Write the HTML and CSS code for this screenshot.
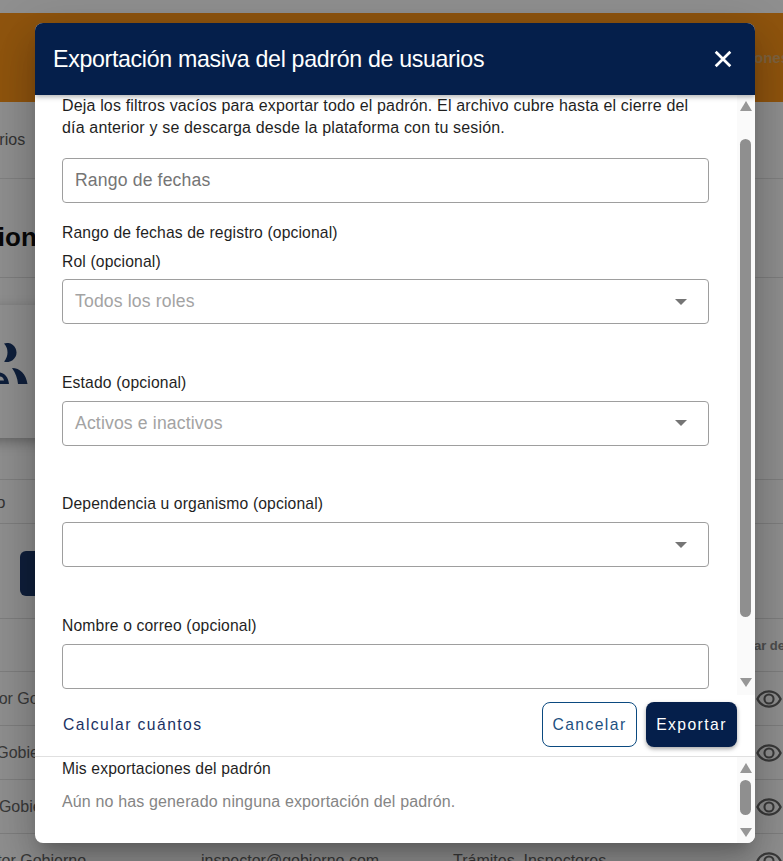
FILE: index.html
```html
<!DOCTYPE html>
<html lang="es">
<head>
<meta charset="utf-8">
<title>Exportación masiva del padrón de usuarios</title>
<link rel="stylesheet" href="styles.css">
</head>
<body>
<div class="page">
  <div class="topgap"></div>
  <div class="banner"><span class="banner-text">Notificaciones</span></div>
  <div class="nav"><span class="nav-text">Usuarios</span></div>
  <div class="title-row"><h1>Gestion</h1></div>
  <div class="stat-zone">
    <div class="stat-card">
      <svg class="users-icon" viewBox="0 0 28 46"><path d="M4 3.500A9.500 9.500 0 1 1 4 21.500A13.300 13.300 0 0 0 4 3.500Z"/><path d="M12 28C20 28 26 34 27.500 44H18C17.500 38 15.500 33 12 28Z"/><path d="M0 32.500C5 33 8.500 38 9 44H0V40.500H4C3.500 38 2 36.500 0 36.500Z"/></svg>
    </div>
  </div>
  <div class="filter-row"><span class="filter-text">Rol o</span></div>
  <div class="action-row"><div class="action-btn"></div></div>
  <div class="thead"><span class="th-right">Mostrar detalle</span></div>
  <div class="tr"><span class="td-name">Valuador Gobierno</span><span class="td-mail">valuador@gobierno.com</span><span class="td-role">Trámites</span><svg class="eye" viewBox="0 0 24 24"><path d="M12 9a3 3 0 1 1 0 6a3 3 0 0 1 0-6m0-1.800a4.800 4.800 0 1 0 0 9.600a4.800 4.800 0 0 0 0-9.600zM12 4.500c5 0 9.270 3.110 11 7.500c-1.730 4.390-6 7.500-11 7.500s-9.270-3.110-11-7.500c1.730-4.390 6-7.500 11-7.500zM3.180 12a9.820 9.820 0 0 0 17.640 0a9.820 9.820 0 0 0-17.640 0z"/></svg></div>
  <div class="tr"><span class="td-name">Fiscal Gobierno</span><span class="td-mail">fiscal@gobierno.com</span><span class="td-role">Trámites</span><svg class="eye" viewBox="0 0 24 24"><path d="M12 9a3 3 0 1 1 0 6a3 3 0 0 1 0-6m0-1.800a4.800 4.800 0 1 0 0 9.600a4.800 4.800 0 0 0 0-9.600zM12 4.500c5 0 9.270 3.110 11 7.500c-1.730 4.390-6 7.500-11 7.500s-9.270-3.110-11-7.500c1.730-4.390 6-7.500 11-7.500zM3.180 12a9.820 9.820 0 0 0 17.640 0a9.820 9.820 0 0 0-17.640 0z"/></svg></div>
  <div class="tr"><span class="td-name">Oficial Gobierno</span><span class="td-mail">oficial@gobierno.com</span><span class="td-role">Trámites</span><svg class="eye" viewBox="0 0 24 24"><path d="M12 9a3 3 0 1 1 0 6a3 3 0 0 1 0-6m0-1.800a4.800 4.800 0 1 0 0 9.600a4.800 4.800 0 0 0 0-9.600zM12 4.500c5 0 9.270 3.110 11 7.500c-1.730 4.390-6 7.500-11 7.500s-9.270-3.110-11-7.500c1.730-4.390 6-7.500 11-7.500zM3.180 12a9.820 9.820 0 0 0 17.640 0a9.820 9.820 0 0 0-17.640 0z"/></svg></div>
  <div class="tr"><span class="td-name">Inspector Gobierno</span><span class="td-mail">inspector@gobierno.com</span><span class="td-role">Trámites, Inspectores</span><svg class="eye" viewBox="0 0 24 24"><path d="M12 9a3 3 0 1 1 0 6a3 3 0 0 1 0-6m0-1.800a4.800 4.800 0 1 0 0 9.600a4.800 4.800 0 0 0 0-9.600zM12 4.500c5 0 9.270 3.110 11 7.500c-1.730 4.390-6 7.500-11 7.500s-9.270-3.110-11-7.500c1.730-4.390 6-7.500 11-7.500zM3.180 12a9.820 9.820 0 0 0 17.640 0a9.820 9.820 0 0 0-17.640 0z"/></svg></div>
</div>

<div class="scrim"></div>

<div class="modal" role="dialog">
  <header class="modal-head">
    <h2>Exportación masiva del padrón de usuarios</h2>
    <svg class="close" viewBox="0 0 16 16"><path d="M1.500 1.500l13 13M14.500 1.500l-13 13"/></svg>
  </header>
  <div class="modal-body">
    <div class="form">
      <p class="intro">Deja los filtros vacíos para exportar todo el padrón. El archivo cubre hasta el cierre del día anterior y se descarga desde la plataforma con tu sesión.</p>
      <div class="box box-date"><span class="ph-strong">Rango de fechas</span></div>
      <div class="label label-range">Rango de fechas de registro (opcional)</div>
      <div class="label label-rol">Rol (opcional)</div>
      <div class="box"><span class="ph">Todos los roles</span><i class="caret"></i></div>
      <div class="label label-field">Estado (opcional)</div>
      <div class="box"><span class="ph">Activos e inactivos</span><i class="caret"></i></div>
      <div class="label label-field">Dependencia u organismo (opcional)</div>
      <div class="box"><i class="caret"></i></div>
      <div class="label label-field">Nombre o correo (opcional)</div>
      <div class="box"></div>
    </div>
    <div class="scrollbar">
      <i class="arrow-up"></i>
      <div class="track"><div class="thumb thumb-main"></div></div>
      <i class="arrow-down"></i>
    </div>
  </div>
  <div class="modal-actions">
    <span class="link-btn">Calcular cuántos</span>
    <div class="actions-right">
      <span class="btn btn-outline">Cancelar</span>
      <span class="btn btn-solid">Exportar</span>
    </div>
  </div>
  <div class="modal-foot">
    <div class="foot-content">
      <div class="foot-title">Mis exportaciones del padrón</div>
      <div class="foot-empty">Aún no has generado ninguna exportación del padrón.</div>
    </div>
    <div class="scrollbar scrollbar-foot">
      <i class="arrow-up"></i>
      <div class="track"><div class="thumb thumb-foot"></div></div>
      <i class="arrow-down"></i>
    </div>
  </div>
</div>
</body>
</html>
```

FILE: styles.css
```css
* { box-sizing: border-box; }
html, body { margin: 0; padding: 0; height: 861px; overflow: hidden; }
body { font-family: "Liberation Sans", Arial, sans-serif; background: #fff; color: #1f1f1f; }

.page { width: 783px; height: 861px; overflow: hidden; }
.topgap { height: 13px; background: #fff; }
.banner { height: 89px; background: #ff961a; display: flex; justify-content: flex-end; align-items: center; white-space: nowrap; }
.banner-text { font-size: 15px; font-weight: 700; color: #e0b070; margin-right: -6px; }
.nav { height: 77px; background: #fff; border-bottom: 1px solid #e4e4e4; display: flex; align-items: center; white-space: nowrap; }
.nav-text { font-size: 16px; color: #5c5c5c; margin-left: -38px; margin-top: -1px; }
.title-row { height: 99px; border-bottom: 1px solid #e0e0e0; display: flex; align-items: center; padding-top: 18px; white-space: nowrap; }
.title-row h1 { margin: 0 0 0 -60px; font-size: 26px; font-weight: 700; color: #111; }
.stat-zone { height: 202px; padding-top: 27px; border-bottom: 1px solid #e0e0e0; }
.stat-card { width: 300px; height: 133px; margin-left: -20px; background: #fff; box-shadow: 0 4px 12px rgba(0,0,0,.3); padding: 35px 0 0 20px; }
.users-icon { display: block; width: 28px; height: 46px; fill: #1b3869; }
.filter-row { height: 44px; border-bottom: 1px solid #e0e0e0; display: flex; align-items: center; white-space: nowrap; }
.filter-text { font-size: 16px; color: #5c5c5c; margin-left: -32px; margin-top: 3px; }
.action-row { height: 95px; padding-top: 27px; border-bottom: 1px solid #e0e0e0; }
.action-btn { width: 120px; height: 45px; margin-left: 20px; background: #1b3869; border-radius: 6px; }
.thead { height: 53px; border-bottom: 1px solid #e0e0e0; display: flex; justify-content: flex-end; align-items: center; white-space: nowrap; }
.th-right { font-size: 13px; font-weight: 700; color: #8a8a8a; margin-right: -28px; }
.tr { height: 54px; border-bottom: 1px solid #e0e0e0; display: flex; align-items: center; font-size: 16px; color: #666; white-space: nowrap; }
.td-name { width: 251px; margin-left: -50px; flex: none; }
.td-mail { width: 252px; flex: none; }
.td-role { width: 302px; flex: none; }
.eye { flex: none; width: 28px; height: 28px; fill: #666; margin-top: 1px; }

.scrim { position: absolute; inset: 0; background: rgba(0,0,0,.44); }

.modal { position: absolute; left: 35px; top: 23px; width: 720px; height: 820px; background: #fff; border-radius: 8px; overflow: hidden; display: flex; flex-direction: column;
  box-shadow: 0 11px 15px -7px rgba(0,0,0,.2), 0 24px 38px 3px rgba(0,0,0,.14), 0 9px 46px 8px rgba(0,0,0,.12); }
.modal-head { height: 72px; flex: none; background: #051f4b; color: #fff; display: flex; align-items: center; justify-content: space-between; padding: 0 23px 0 18px; box-shadow: 0 2px 5px rgba(0,0,0,.3); position: relative; z-index: 1; }
.modal-head h2 { margin: 0; font-size: 23.200px; font-weight: 400; line-height: 32px; letter-spacing: -.33px; }
.close { width: 18px; height: 18px; fill: none; stroke: #fff; stroke-width: 2.4; margin-top: -1px; }

.modal-body { height: 600px; flex: none; display: flex; justify-content: space-between; overflow: hidden; }
.form { width: 674px; padding-left: 27px; }
.intro { margin: 0; font-size: 16px; line-height: 22px; color: #1f1f1f; letter-spacing: .01em; }
.box { width: 647px; height: 45px; border: 1px solid #9e9e9e; border-radius: 4px; display: flex; align-items: center; justify-content: space-between; padding: 0 21px 0 12px; }
.box-date { margin-top: 19px; }
.ph-strong { font-size: 17.600px; color: #757575; letter-spacing: .009em; }
.ph { font-size: 17.600px; color: #a3a3a3; letter-spacing: .009em; }
.caret { width: 0; height: 0; border-left: 6px solid transparent; border-right: 6px solid transparent; border-top: 6px solid #757575; margin-left: auto; }
.label { font-size: 15.700px; line-height: 20px; color: #1f1f1f; letter-spacing: .009em; }
.label-range { margin-top: 20px; }
.label-rol { margin-top: 9px; margin-bottom: 7px; }
.label-field { margin-top: 48.670px; margin-bottom: 8px; }

.scrollbar { width: 18px; flex: none; background: #fafafa; display: flex; flex-direction: column; align-items: center; padding: 6px 1px 8px 0; }
.track { flex: 1; width: 11px; }
.thumb { width: 11px; background: #8f8f8f; border-radius: 6px; }
.thumb-main { height: 478px; margin-top: 28px; }
.thumb-foot { height: 35px; margin-top: 7px; }
.arrow-up { width: 0; height: 0; border-left: 6.500px solid transparent; border-right: 6.500px solid transparent; border-bottom: 10px solid #979797; }
.arrow-down { width: 0; height: 0; border-left: 6.500px solid transparent; border-right: 6.500px solid transparent; border-top: 9px solid #979797; }

.modal-actions { height: 62px; flex: none; display: flex; align-items: flex-start; justify-content: space-between; padding: 7px 18px 0 28px; border-bottom: 1px solid #e0e0e0; }
.link-btn { font-size: 15.700px; line-height: 45px; letter-spacing: .09em; color: #1a3163; }
.actions-right { display: flex; gap: 9px; }
.btn { height: 45px; line-height: 43px; border-radius: 8px; font-size: 15.700px; letter-spacing: .09em; text-align: center; }
.btn-outline { width: 95px; border: 1px solid #0b4a80; color: #1d5080; }
.btn-solid { width: 91px; line-height: 45px; background: #051f4b; color: #fff; box-shadow: 0 2px 4px rgba(0,0,0,.35); }

.modal-foot { flex: 1; display: flex; justify-content: space-between; min-height: 0; }
.foot-content { padding: 1px 0 0 27px; }
.foot-title { font-size: 15.700px; line-height: 22px; letter-spacing: .009em; color: #1f1f1f; }
.foot-empty { font-size: 16px; line-height: 22px; margin-top: 11px; color: #858585; letter-spacing: .009em; }
.scrollbar-foot { padding: 6px 1px 6px 0; }
```
